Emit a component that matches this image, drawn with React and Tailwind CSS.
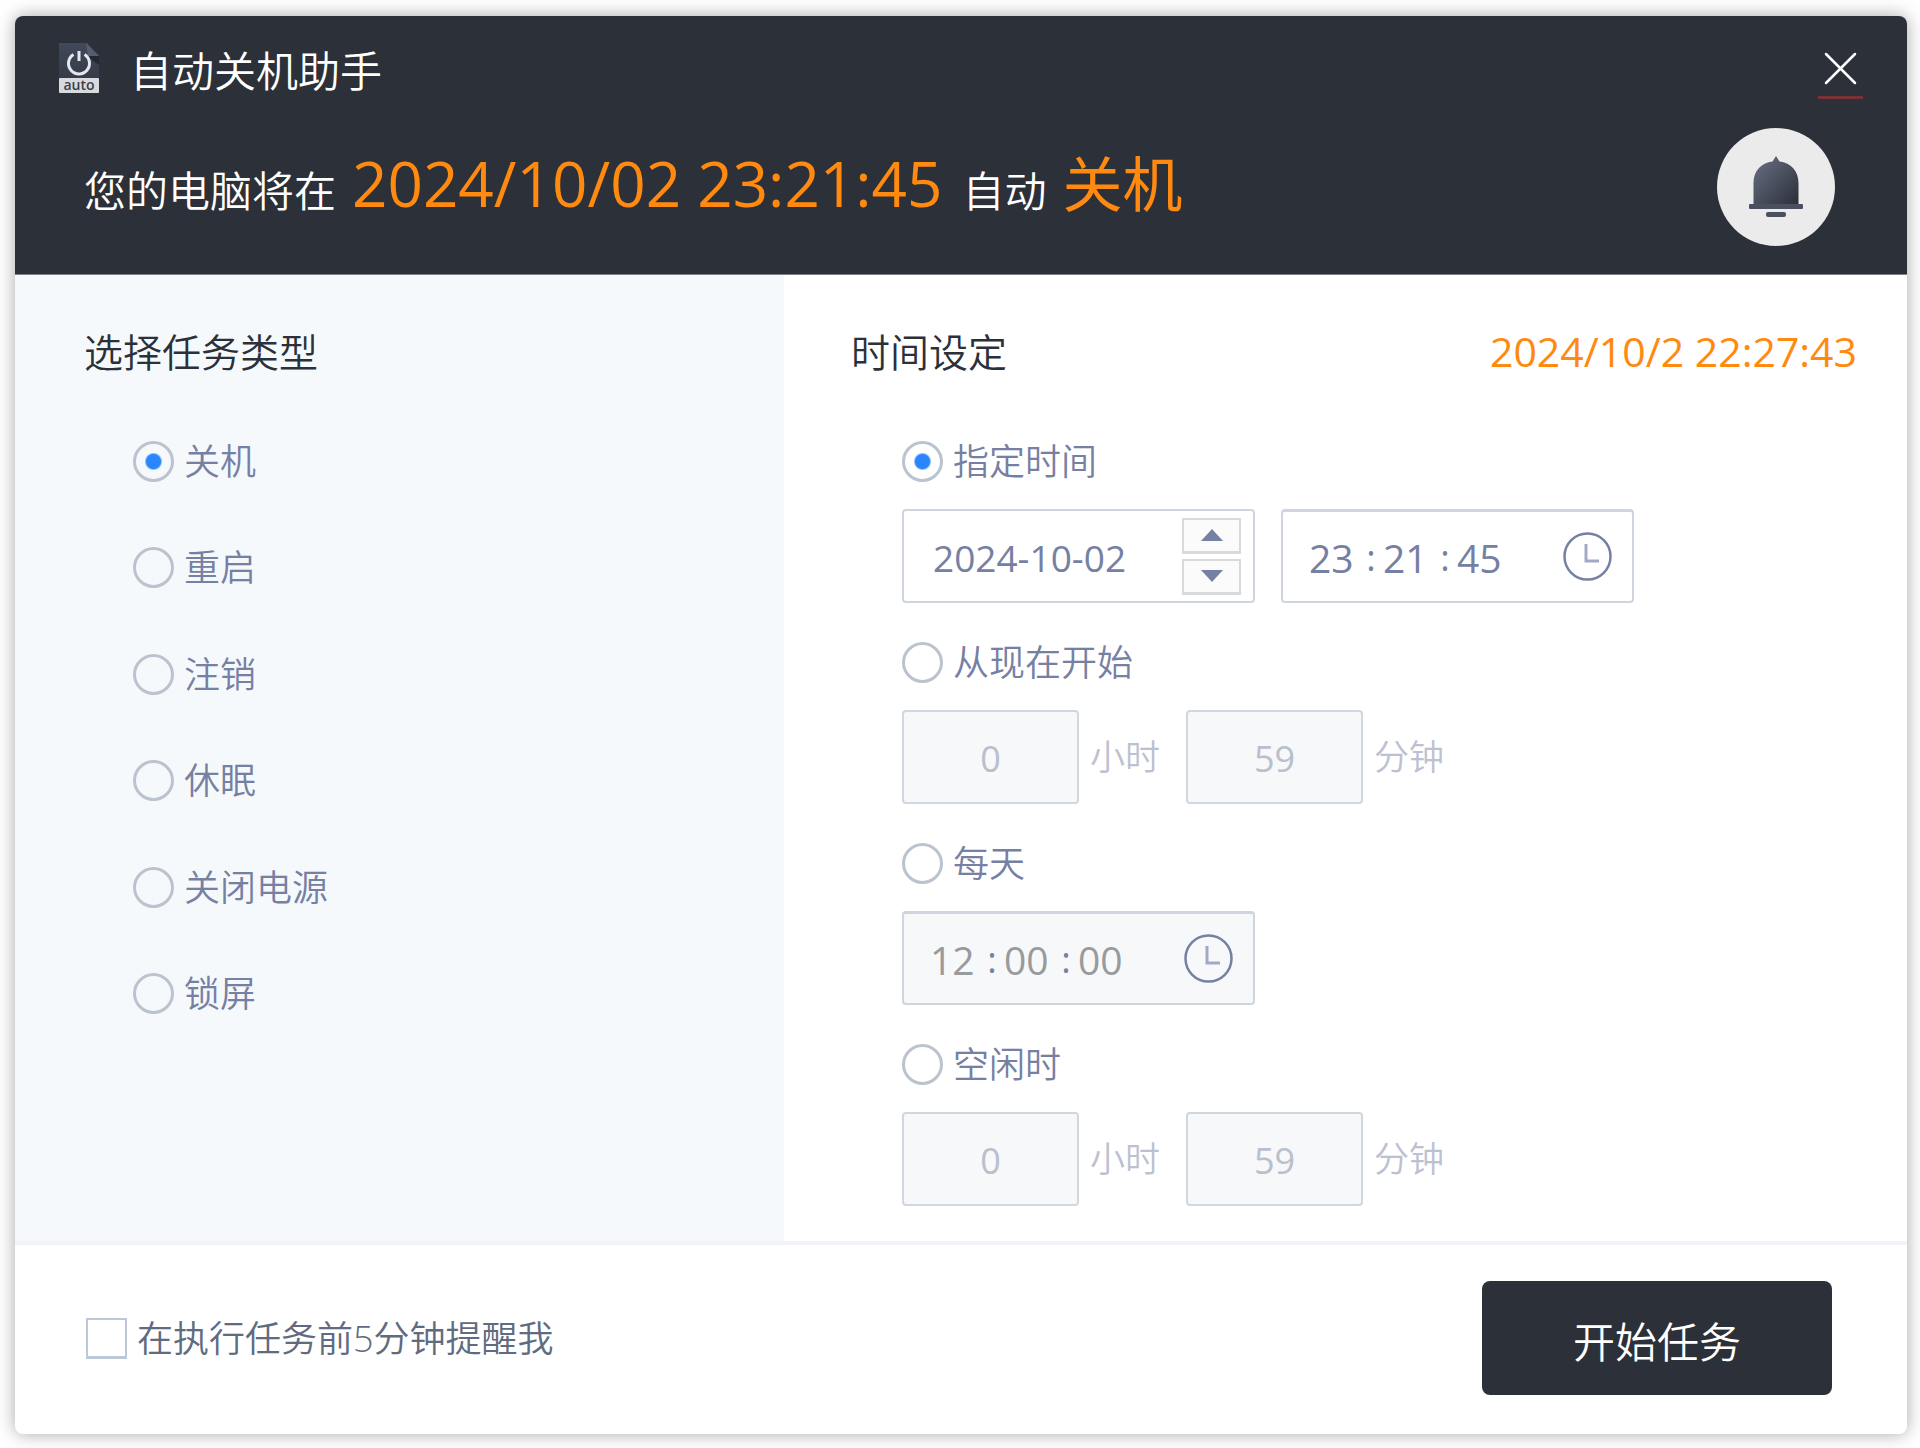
import React, { useState } from 'react';

const taskTypes = ['关机', '重启', '注销', '休眠', '关闭电源', '锁屏'];

const radioClass =
  'h-[41px] w-[41px] shrink-0 appearance-none rounded-full border-3 border-[#bac3ce] checked:bg-[radial-gradient(circle,#2a86ff_7px,transparent_9px)]';

const Radio = ({ name, label, checked, onChange }) => (
  <label className="flex h-[41px] w-fit items-center gap-[10px] text-4xl leading-[41px] text-[#7680a3]">
    <input type="radio" name={name} className={radioClass} checked={checked} onChange={onChange} />
    {label}
  </label>
);

const AppLogo = () => (
  <svg className="h-[52px] w-[42px]" viewBox="0 0 42 52" aria-hidden="true">
    <defs>
      <linearGradient id="logo-page" x1="0" y1="0" x2="0" y2="1">
        <stop offset="0" stopColor="#41495a" />
        <stop offset="1" stopColor="#2f3541" />
      </linearGradient>
    </defs>
    <path d="M1 1h28l12 13v37H1z" fill="url(#logo-page)" />
    <path d="M29 14h12v9z" fill="#232831" />
    <path d="M28 1l13 13H30z" fill="#565d6f" />
    <path d="M15.500 12.500a10.500 10.500 0 1 0 11 0" fill="none" stroke="#e6e7ea" strokeWidth="3" />
    <path d="M21 9v10" stroke="#e6e7ea" strokeWidth="3" />
    <rect x="1" y="36" width="40" height="15" rx="1" fill="#d9dadd" />
    <text x="21" y="48" textAnchor="middle" fontSize="14" fontWeight="600" fontFamily="Open Sans, sans-serif" fill="#3a3f4b">
      auto
    </text>
  </svg>
);

const BellIcon = () => (
  <svg className="h-[62px] w-[54px]" viewBox="0 0 54 62" aria-hidden="true">
    <defs>
      <linearGradient id="bell-body" x1="0" y1="0" x2="1" y2="1">
        <stop offset="0.200" stopColor="#5d6475" />
        <stop offset="1" stopColor="#2b2f3a" />
      </linearGradient>
    </defs>
    <path d="M27 0l3.500 5.500C42 7 49.500 15 49.500 27v22h-45V27C4.500 15 12 7 23.500 5.500z" fill="url(#bell-body)" />
    <rect x="0" y="48" width="54" height="5" rx="1" fill="#4b5060" />
    <rect x="17" y="56" width="20" height="5" rx="2" fill="#4b5060" />
  </svg>
);

const ClockIcon = () => (
  <svg className="h-[49px] w-[49px] shrink-0" viewBox="0 0 49 49" fill="none" aria-hidden="true">
    <circle cx="24.500" cy="24.500" r="23" stroke="#7680a3" strokeWidth="2.500" />
    <path d="M23 12v17h13" stroke="#a3a9c5" strokeWidth="3" />
  </svg>
);

const TimeField = ({ label, value, disabled }) => {
  const [parts, setParts] = useState(value);
  const units = ['时', '分', '秒'];

  const handleChange = (index, text) => {
    setParts(prev => prev.map((part, i) => (i === index ? text : part)));
  };

  return (
    <div
      role="group"
      aria-label={label}
      className={`flex h-[94px] w-[353px] items-center justify-between rounded border-2 border-t-3 border-[#ced5de] pr-5 pl-[26px] ${disabled ? 'bg-[#f6f8fa]' : 'bg-white'}`}
    >
      <div className="flex items-center pt-[3px] text-[39px] leading-[48px] font-normal text-[#7680a3]">
        {parts.map((part, i) => (
          <React.Fragment key={units[i]}>
            {i > 0 && <span className="w-7 pl-1 text-center text-4xl leading-[40px]">:</span>}
            <input
              type="text"
              aria-label={units[i]}
              className={`w-[46px] bg-transparent outline-none ${disabled ? 'text-[#999a9c]' : 'text-[#7680a3]'}`}
              value={part}
              disabled={disabled}
              onChange={(e) => handleChange(i, e.target.value)}
            />
          </React.Fragment>
        ))}
      </div>
      <ClockIcon />
    </div>
  );
};

const DateField = () => {
  const [date, setDate] = useState('2024-10-02');

  const shift = (days) => {
    const next = new Date(`${date}T00:00:00Z`);
    next.setUTCDate(next.getUTCDate() + days);
    setDate(next.toISOString().slice(0, 10));
  };

  const spinClass =
    'flex h-9 w-[59px] items-center justify-center border-2 border-b-3 border-[#d9dadb] bg-[#fbfbfb]';

  return (
    <div className="flex h-[94px] w-[353px] items-center justify-between rounded border-2 border-[#ced5de] bg-white pr-3 pl-[29px]">
      <input
        type="text"
        aria-label="日期"
        className="w-[210px] bg-transparent pt-[3px] text-[37px] leading-[48px] font-normal text-[#7680a3] outline-none"
        value={date}
        onChange={(e) => setDate(e.target.value)}
      />
      <div className="flex flex-col gap-[5px]">
        <button type="button" aria-label="增加" className={spinClass} onClick={() => shift(1)}>
          <svg className="h-3 w-[22px]" viewBox="0 0 22 12" aria-hidden="true">
            <path d="M11 0l11 12H0z" fill="#7680a3" />
          </svg>
        </button>
        <button type="button" aria-label="减少" className={spinClass} onClick={() => shift(-1)}>
          <svg className="h-3 w-[22px]" viewBox="0 0 22 12" aria-hidden="true">
            <path d="M11 12L0 0h22z" fill="#7680a3" />
          </svg>
        </button>
      </div>
    </div>
  );
};

const NumberField = ({ value, unit }) => (
  <label className="flex items-center gap-[11px] text-[35px] leading-[48px] text-[#bcc1d1]">
    <input
      type="text"
      className="h-[94px] w-[177px] rounded border-2 border-[#d1d7df] bg-[#f6f8fa] pt-[3px] text-center text-4xl font-normal text-[#b9c0cc]"
      defaultValue={value}
      disabled
    />
    {unit}
  </label>
);

const DurationFields = () => (
  <div className="flex gap-[26px]">
    <NumberField value="0" unit="小时" />
    <NumberField value="59" unit="分钟" />
  </div>
);

const App = () => {
  const [task, setTask] = useState('关机');
  const [mode, setMode] = useState('指定时间');
  const [remind, setRemind] = useState(false);

  const timeModes = [
    {
      label: '指定时间',
      fields: (
        <div className="flex gap-[26px]">
          <DateField />
          <TimeField label="指定时间" value={['23', '21', '45']} />
        </div>
      ),
    },
    { label: '从现在开始', fields: <DurationFields /> },
    { label: '每天', fields: <TimeField label="每天" value={['12', '00', '00']} disabled /> },
    { label: '空闲时', fields: <DurationFields /> },
  ];

  return (
    <div className="min-h-screen bg-white pt-4 pr-[13px] pb-[14px] pl-[15px] font-['Open_Sans','Noto_Sans_CJK_SC',sans-serif] font-[350]">
      <main className="overflow-hidden rounded-lg bg-white shadow-[0_0_18px_rgba(0,0,0,0.35)]">
        <header className="border-b border-[#7f8088] bg-[#2c3038] pt-[26px] pb-7 text-white">
          <div className="flex h-[52px] items-center justify-between pr-11 pl-[43px]">
            <div className="flex items-center gap-[30px]">
              <AppLogo />
              <h1 className="pt-[6px] text-[42px] leading-[52px]">自动关机助手</h1>
            </div>
            <button type="button" aria-label="关闭" className="flex h-[52px] w-[45px] items-start justify-center">
              <svg className="h-[58px] w-[45px] shrink-0" viewBox="0 0 45 58" fill="none" aria-hidden="true">
                <path d="M8 12l29 29M37 12L8 41" stroke="#fff" strokeWidth="2.500" strokeLinecap="round" />
                <path d="M0 55.500h45" stroke="#8e2f34" strokeWidth="2.500" />
              </svg>
            </button>
          </div>
          <div className="mt-[34px] flex h-[118px] items-center justify-between pr-[72px] pl-[69px]">
            <p className="flex items-baseline text-[42px] leading-[82px]">
              <span>您的电脑将在</span>
              <span className="ml-4 text-[62px] font-normal text-[#ff8a0f]">2024/10/02 23:21:45</span>
              <span className="ml-5">自动</span>
              <span className="ml-4 text-[60px] font-normal text-[#ff8a0f]">{task}</span>
            </p>
            <button
              type="button"
              aria-label="提醒"
              className="flex h-[118px] w-[118px] items-center justify-center rounded-full bg-[#ebebeb]"
            >
              <BellIcon />
            </button>
          </div>
        </header>

        <div className="grid grid-cols-[769fr_1123fr] border-b-4 border-[#f2f3f8]">
          <section className="bg-[#f5f9fc] pt-[53px] pl-[69px] text-[#2c3038]">
            <h2 className="text-[39px] leading-[48px]">选择任务类型</h2>
            <div className="mt-[65px] flex h-[573px] flex-col justify-between pl-[49px]">
              {taskTypes.map((type) => (
                <Radio key={type} name="task" label={type} checked={task === type} onChange={() => setTask(type)} />
              ))}
            </div>
          </section>

          <section className="pt-[53px] pb-[35px] pl-[67px] text-[#2c3038]">
            <div className="flex items-start justify-between pr-[50px]">
              <h2 className="text-[39px] leading-[48px]">时间设定</h2>
              <time className="text-[41px] leading-[46px] font-normal text-[#ff8a0f]">2024/10/2 22:27:43</time>
            </div>
            <div className="mt-[65px] flex flex-col gap-[39px] pl-[51px]">
              {timeModes.map(({ label, fields }) => (
                <div key={label} className="flex flex-col gap-[27px]">
                  <Radio name="mode" label={label} checked={mode === label} onChange={() => setMode(label)} />
                  {fields}
                </div>
              ))}
            </div>
          </section>
        </div>

        <footer className="flex items-center justify-between pt-9 pr-[75px] pb-[39px] pl-[71px]">
          <label className="flex items-center gap-[10px] text-4xl leading-[41px] text-[#606b80]">
            <input
              type="checkbox"
              className="h-[41px] w-[41px] appearance-none border-2 border-b-3 border-[#bcc8d8] checked:bg-[#2a86ff]"
              checked={remind}
              onChange={(e) => setRemind(e.target.checked)}
            />
            在执行任务前5分钟提醒我
          </label>
          <button type="button" className="h-[114px] w-[350px] rounded-lg bg-[#2c3038] pt-[6px] text-[42px] text-white">
            开始任务
          </button>
        </footer>
      </main>
    </div>
  );
};

export default App;
